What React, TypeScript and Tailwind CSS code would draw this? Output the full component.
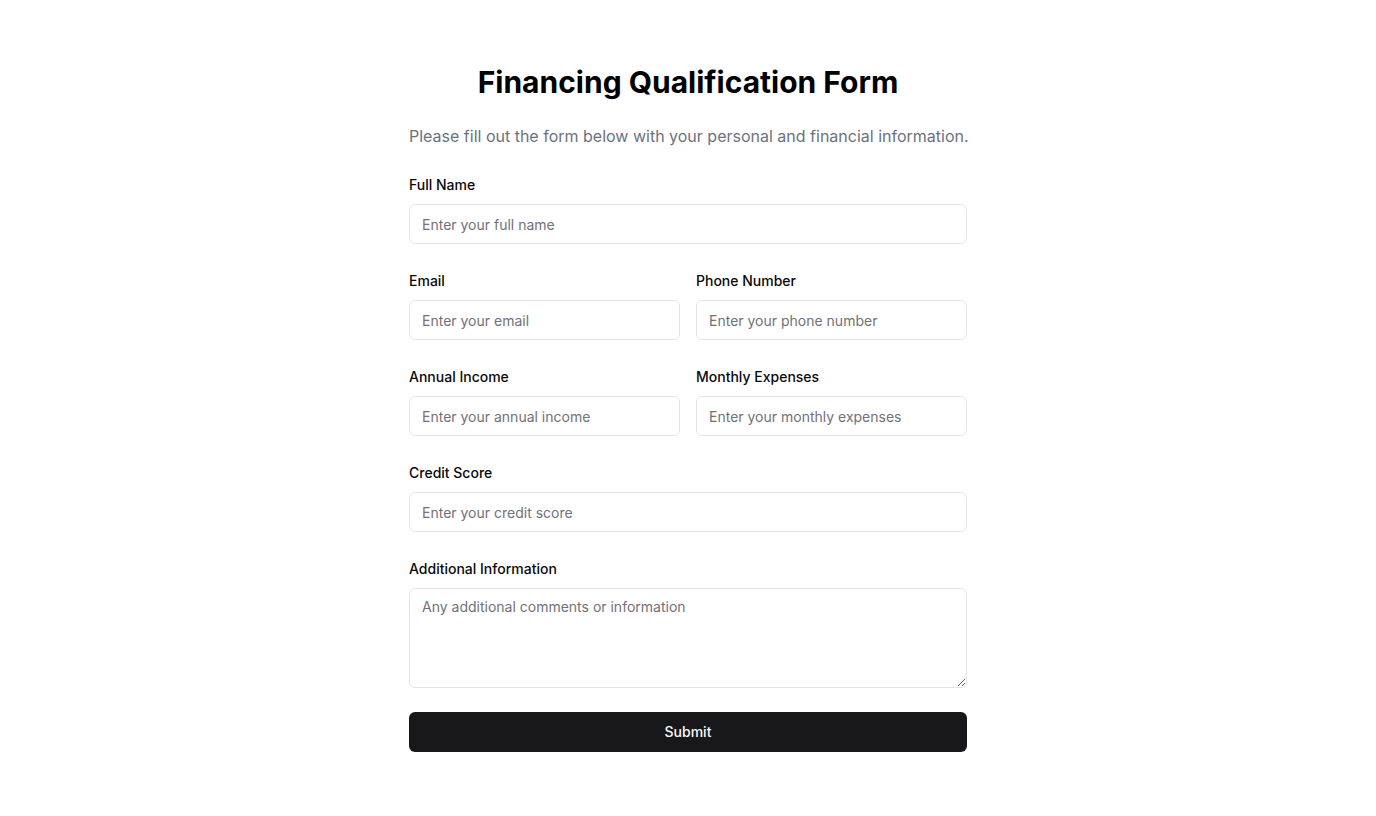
export default function App() {
    const inputCls = "h-10 w-full rounded-md border border-[#e4e4e7] bg-white px-3 py-2 text-sm text-[#09090b] placeholder:text-[#71717a] outline-none";
    const labelCls = "block text-sm leading-6 font-medium text-[#09090b] pt-px -mb-px";

    return <div className="min-h-screen bg-white font-['Inter',sans-serif]">
        <div className="mx-auto w-[558px] pt-16 pb-16">
            <h1 className="text-3xl font-bold text-center text-black">Financing Qualification Form</h1>
            <p className="mt-6 text-base leading-6 text-[#6b7280] whitespace-nowrap">
                Please fill out the form below with your personal and financial information.
            </p>
            <form className="mt-6 flex flex-col gap-6" onSubmit={(e) => e.preventDefault()}>
                <div className="flex flex-col gap-2">
                    <label className={labelCls}>Full Name</label>
                    <input className={inputCls} placeholder="Enter your full name" />
                </div>
                <div className="grid grid-cols-2 gap-4">
                    <div className="flex flex-col gap-2">
                        <label className={labelCls}>Email</label>
                        <input className={inputCls} placeholder="Enter your email" />
                    </div>
                    <div className="flex flex-col gap-2">
                        <label className={labelCls}>Phone Number</label>
                        <input className={inputCls} placeholder="Enter your phone number" />
                    </div>
                </div>
                <div className="grid grid-cols-2 gap-4">
                    <div className="flex flex-col gap-2">
                        <label className={labelCls}>Annual Income</label>
                        <input className={inputCls} placeholder="Enter your annual income" />
                    </div>
                    <div className="flex flex-col gap-2">
                        <label className={labelCls}>Monthly Expenses</label>
                        <input className={inputCls} placeholder="Enter your monthly expenses" />
                    </div>
                </div>
                <div className="flex flex-col gap-2">
                    <label className={labelCls}>Credit Score</label>
                    <input className={inputCls} placeholder="Enter your credit score" />
                </div>
                <div className="flex flex-col gap-2">
                    <label className={labelCls}>Additional Information</label>
                    <textarea className="h-[100px] w-full rounded-md border border-[#e4e4e7] bg-white px-3 py-2 text-sm leading-5 text-[#09090b] placeholder:text-[#71717a] outline-none" placeholder="Any additional comments or information" />
                </div>
                <button type="submit" className="h-10 w-full rounded-md bg-[#18181b] text-sm font-medium text-[#fafafa]">
                    Submit
                </button>
            </form>
        </div>
    </div>
}
